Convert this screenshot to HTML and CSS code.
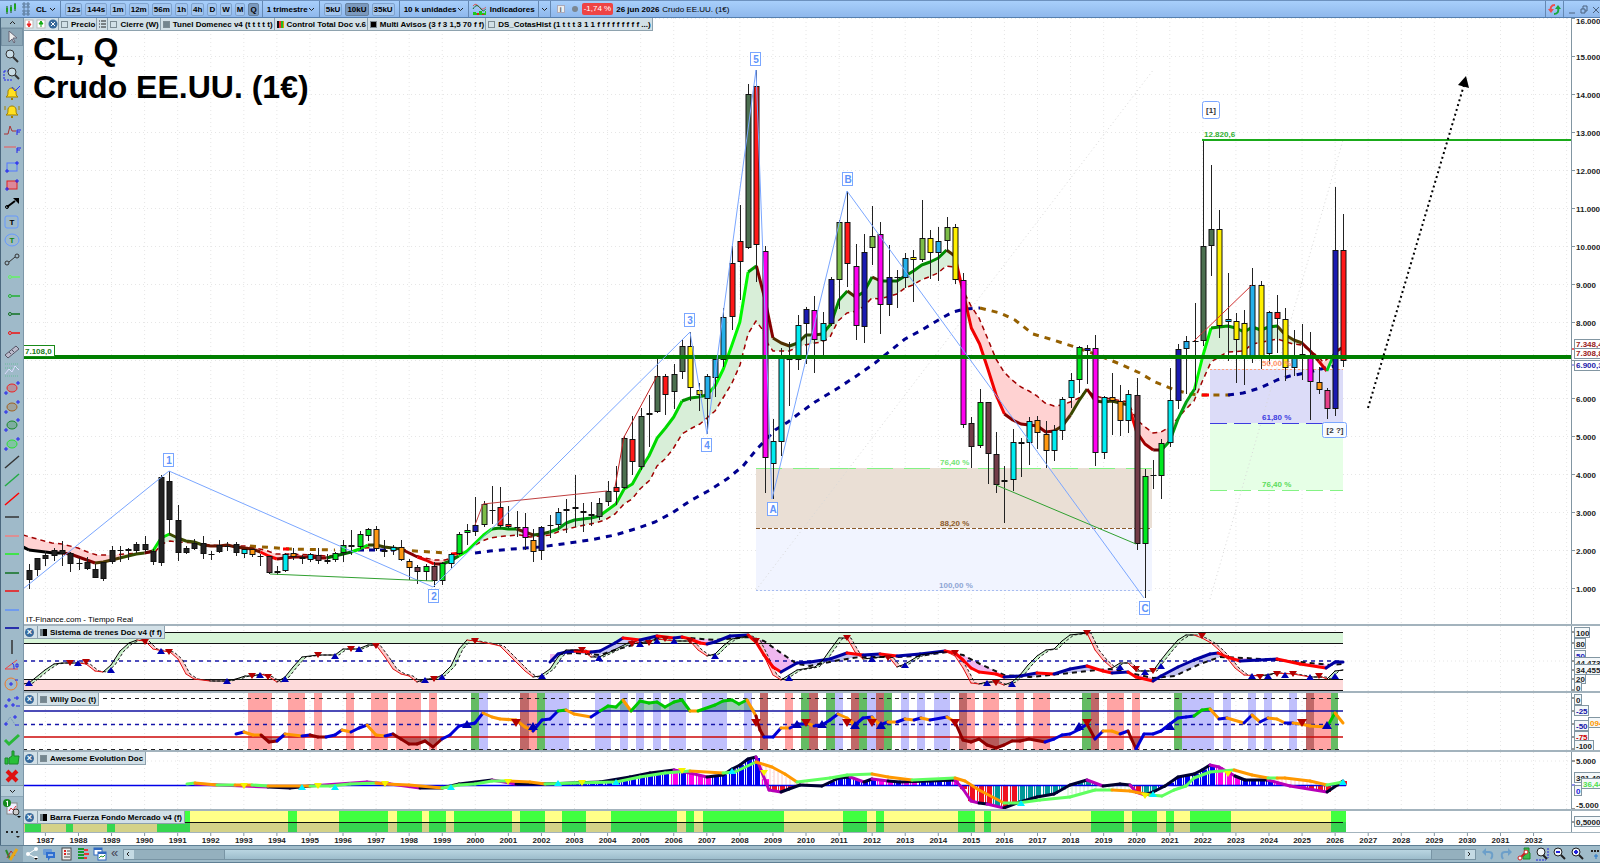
FILE: index.html
```html
<!DOCTYPE html>
<html lang="es">
<head>
    <meta charset="UTF-8">
    <meta name="viewport" content="width=device-width, initial-scale=1.0">
    <title>CL, Q - Crudo EE.UU. (1€)</title>
    <link rel="stylesheet" href="styles.css">
</head>
<body>
    <header class="topbar">
        <svg class="logo" width="14" height="14" viewBox="0 0 14 14"><path d="M3 4v8M7 3v8M11 1v8" stroke="#145a14"/><path d="M2 6h2v4H2zM6 5h2v4H6zM10 2h2v5h-2z" fill="#1ea51e"/></svg>
        <svg class="grip" width="8" height="14" viewBox="0 0 8 14"><path d="M1 1h2v2H1zM5 1h2v2H5zM1 4h2v2H1zM5 4h2v2H5zM1 8h2v2H1zM5 8h2v2H5zM1 11h2v2H1zM5 11h2v2H5z" fill="none" stroke="#5b7897"/></svg>
        <button class="menu symbol">CL <svg width="7" height="5" viewBox="0 0 7 5"><path d="M1 1l2.500 2.500L6 1"/></svg></button>
        <div class="group times">
            <button>12s</button><button>144s</button><button>1m</button><button>12m</button><button>56m</button><button>1h</button><button>4h</button><button>D</button><button>W</button><button>M</button><button class="on">Q</button>
        </div>
        <button class="menu period">1 trimestre <svg width="7" height="5" viewBox="0 0 7 5"><path d="M1 1l2.500 2.500L6 1"/></svg></button>
        <div class="group units">
            <button>5kU</button><button class="on">10kU</button><button>35kU</button>
        </div>
        <button class="menu amount">10 k unidades <svg width="7" height="5" viewBox="0 0 7 5"><path d="M1 1l2.500 2.500L6 1"/></svg></button>
        <button class="menu indicators"><svg class="pic" width="15" height="13" viewBox="0 0 15 13"><path d="M1 12V9h3v1h3V8h3v2h3V8h1v4z" fill="#1fc71f"/><path d="M5 12v-2h2v2zM10 12v-1h2v1z" fill="#d22"/><path d="M1 3c3-4 5 0 7 2s4 1 6-1" fill="none" stroke="#d55"/><path d="M1 6c3-5 5-4 8 0s4 0 5 0" fill="none" stroke="#196b2b"/></svg>Indicadores</button>
        <button class="menu small" aria-label="Más indicadores"><svg width="7" height="5" viewBox="0 0 7 5"><path d="M1 1l2.500 2.500L6 1"/></svg></button>
        <span class="info">i</span>
        <span class="dot"></span>
        <span class="change">-1,74 %</span>
        <b class="date">26 jun 2026</b>
        <span class="name">Crudo EE.UU. (1€)</span>
        <button class="refresh" aria-label="Actualizar"><svg width="13" height="13" viewBox="0 0 13 13" fill="none" stroke-width="2"><path d="M7 2C3 2 2 5 3 8" stroke="#ef4c4c"/><path d="M0 6l3 4 3-4z" fill="#ef4c4c"/><path d="M6 11c4 0 5-3 4-6" stroke="#18a83a"/><path d="M7 6l3-4 3 4z" fill="#18a83a"/></svg></button>
        <div class="window">
            <button aria-label="Minimizar"><svg width="8" height="9" viewBox="0 0 8 9"><path d="M1 8h6"/></svg></button>
            <button aria-label="Restaurar"><svg width="8" height="9" viewBox="0 0 8 9"><path d="M1 4h4v4H1zM3 4V1h4v5H5"/></svg></button>
            <button aria-label="Cerrar"><svg width="8" height="9" viewBox="0 0 8 9"><path d="M1 2l6 6M7 2L1 8"/></svg></button>
        </div>
    </header>

    <div class="work">
        <aside class="sidebar">
            <button class="up" aria-label="Subir"><svg width="7" height="5" viewBox="0 0 7 5"><path d="M1 4l2.500-2.500L6 4"/></svg></button>
            <div class="tools" id="tools"></div>
            <button class="down" aria-label="Bajar"><svg width="7" height="5" viewBox="0 0 7 5"><path d="M1 1l2.500 2.500L6 1"/></svg></button>
            <button class="extra" aria-label="Listas"><svg width="18" height="20" viewBox="0 0 18 20"><rect x="4" y="4" width="10" height="11" fill="#eef" stroke="#888"/><path d="M6 12l2-3 2 2 3-4" stroke="#d33" fill="none"/><circle cx="4" cy="4" r="4" fill="#138a1c"/><path d="M3 3l1.500-1v5" stroke="#fff" fill="none"/><circle cx="13" cy="13" r="3" fill="#ccc" stroke="#333"/><path d="M14 17h4l-2 2z"/></svg></button>
            <button class="extra" aria-label="Más"><svg width="18" height="12" viewBox="0 0 18 12"><path d="M3 4h2v2H3zM8 4h2v2H8zM13 4h2v2h-2zM13 9h4l-2 2z" fill="#222"/></svg></button>
        </aside>

        <main class="charts">
            <section class="panel price">
                <svg class="plot" id="price"></svg>
                <svg class="axis" id="priceAxis"></svg>
                <div class="tabs">
                    <div class="cell marks">
                        <svg width="34" height="10" viewBox="0 0 34 10"><rect x="1" y="1" width="8" height="8" fill="#fff" stroke="#bbb"/><path d="M5 2v4M3 5l2 3 2-3z" stroke="#e22" fill="#e22"/><rect x="13" y="1" width="8" height="8" fill="#fff" stroke="#bbb"/><path d="M17 8V4M15 5l2-3 2 3z" stroke="#1a1" fill="#1a1"/><circle cx="29" cy="5" r="4.500" fill="#36699b"/><path d="M27 3l4 4M31 3l-4 4" stroke="#fff"/></svg>
                    </div>
                    <div class="cell"><i class="box"></i>Precio</div>
                    <div class="cell list"><svg width="7" height="8" viewBox="0 0 7 8"><path d="M0 1h1M2 1h5M0 4h1M2 4h5M0 7h1M2 7h5" stroke="#222"/></svg></div>
                    <div class="cell"><i class="box"></i>Cierre (W)</div>
                    <div class="cell"><i class="box grey"></i>Tunel Domenec v4 (t t t t t)</div>
                    <div class="cell"><i class="box multi"></i>Control Total Doc v.6</div>
                    <div class="cell"><i class="box black"></i>Multi Avisos (3 f 3 1,5 70 f f)</div>
                    <div class="cell"><i class="box"></i>DS_CotasHist (1 t t t 3 1 1 f f f f f f f f f ...)</div>
                </div>
                <h1 class="title">CL, Q<br>Crudo EE.UU. (1€)</h1>
                <p class="source">IT-Finance.com - Tiempo Real</p>
            </section>
            <section class="panel trains">
                <svg class="plot" id="trains"></svg>
                <svg class="axis" id="trainsAxis"></svg>
                <h2 class="tag"><span class="close">×</span><span class="cell"><i class="box half"></i>Sistema de trenes Doc v4 (f f)</span></h2>
            </section>
            <section class="panel willy">
                <svg class="plot" id="willy"></svg>
                <svg class="axis" id="willyAxis"></svg>
                <h2 class="tag"><span class="close">×</span><span class="cell"><i class="box grey"></i>Willy Doc (t)</span></h2>
            </section>
            <section class="panel awesome">
                <svg class="plot" id="awesome"></svg>
                <svg class="axis" id="awesomeAxis"></svg>
                <h2 class="tag"><span class="close">×</span><span class="cell"><i class="box grey"></i>Awesome Evolution Doc</span></h2>
            </section>
            <section class="panel force">
                <svg class="plot" id="force"></svg>
                <svg class="axis" id="forceAxis"></svg>
                <h2 class="tag"><span class="close">×</span><span class="cell"><i class="box half"></i>Barra Fuerza Fondo Mercado v4 (f)</span></h2>
            </section>
            <svg class="years" id="years"></svg>
        </main>
    </div>

    <footer class="bottombar">
        <button class="draw" aria-label="Dibujar"><svg width="14" height="14" viewBox="0 0 14 14"><path d="M1 3l4 9" stroke="#2a8a2a" stroke-width="2"/><path d="M2 11l4-7 4 5" stroke="#a33" fill="none"/><path d="M5 13l7-11" stroke="#e8a818" stroke-width="3"/></svg></button>
        <div class="icons">
            <button aria-label="Compartir"><svg width="14" height="14" viewBox="0 0 14 14"><path d="M11 2L3 7l8 4" stroke="#fff" fill="none"/><circle cx="3" cy="7" r="2" fill="#fff"/><circle cx="11" cy="2" r="2" fill="#fff"/><circle cx="11" cy="11" r="2" fill="#fff"/><path d="M9 11h4l-2 2z"/></svg></button>
            <button aria-label="Chat"><svg width="14" height="14" viewBox="0 0 14 14"><rect x="1" y="2" width="9" height="6" rx="1" fill="#6a9bd8"/><path d="M4 5h9v6H8l-2 3v-3H4z" fill="#2f6fd0"/><path d="M6 8h5" stroke="#fff"/></svg></button>
            <button aria-label="Notas"><svg width="14" height="14" viewBox="0 0 14 14"><rect x="3" y="1" width="9" height="12" fill="#eee" stroke="#444"/><path d="M5 4h2M5 7h2" stroke="#d22" stroke-width="2"/><path d="M8 4h3M8 7h3M5 10h6" stroke="#444"/></svg></button>
            <button aria-label="Órdenes"><svg width="14" height="14" viewBox="0 0 14 14"><path d="M2 2h6M2 5h6M2 8h6M2 11h6" stroke="#18982c" stroke-width="2"/><path d="M8 3h4M8 7h5M8 11h3" stroke="#e33" stroke-width="2"/></svg></button>
            <button aria-label="Ventanas"><svg width="14" height="14" viewBox="0 0 14 14"><rect x="1" y="1" width="8" height="7" fill="#fff" stroke="#2f68c0"/><rect x="5" y="5" width="8" height="8" fill="#fff" stroke="#2f68c0"/><path d="M1 2h8M5 6h8" stroke="#2f68c0" stroke-width="2"/><path d="M6 11l2-2 2 1 2-2" stroke="#2a9a2a" fill="none"/></svg></button>
        </div>
        <span class="collapse">«</span>
        <div class="scroll">
            <button aria-label="Izquierda"><svg width="4" height="6" viewBox="0 0 4 6"><path d="M3 1L1 3l2 2"/></svg></button>
            <span class="before"></span><span class="thumb"></span><span class="after"></span>
            <button aria-label="Derecha"><svg width="4" height="6" viewBox="0 0 4 6"><path d="M1 1l2 2-2 2"/></svg></button>
        </div>
        <div class="icons zooms">
            <button aria-label="Deshacer"><svg width="14" height="14" viewBox="0 0 14 14"><path d="M3 5h5c4 0 4 4 2 7" stroke="#6c9fc9" stroke-width="2" fill="none"/><path d="M5 1v8L1 5z" fill="#6c9fc9"/></svg></button>
            <button aria-label="Rehacer"><svg width="14" height="14" viewBox="0 0 14 14"><path d="M11 5H6c-4 0-4 4-2 7" stroke="#6c9fc9" stroke-width="2" fill="none"/><path d="M9 1v8l4-4z" fill="#6c9fc9"/></svg></button>
            <button aria-label="Configurar"><svg width="14" height="14" viewBox="0 0 14 14"><path d="M7 1h5v4l1 1v6H6V9l2-1z" fill="#3cbc4c" stroke="#188a28"/><path d="M9 5l-6 6" stroke="#c22" stroke-width="2"/><circle cx="3" cy="11" r="2" fill="#fff" stroke="#c22"/><circle cx="9" cy="5" r="2" fill="#fff" stroke="#c22"/></svg></button>
            <button aria-label="Ajustar"><svg width="14" height="14" viewBox="0 0 14 14"><circle cx="6" cy="5" r="4" fill="#eef4f8" stroke="#222"/><path d="M8 8l4 4" stroke="#222" stroke-width="2"/><path d="M13 1v10M1 13h10" stroke="#22d" stroke-dasharray="2 1"/></svg></button>
            <button aria-label="Alejar"><svg width="14" height="14" viewBox="0 0 14 14"><circle cx="5" cy="5" r="4" fill="#eef4f8" stroke="#222"/><path d="M8 8l4 4" stroke="#222" stroke-width="2"/><path d="M3 5h4" stroke="#22d" stroke-width="2"/></svg></button>
            <button aria-label="Acercar"><svg width="14" height="14" viewBox="0 0 14 14"><circle cx="5" cy="5" r="4" fill="#eef4f8" stroke="#222"/><path d="M8 8l4 4" stroke="#222" stroke-width="2"/><path d="M3 5h4M5 3v4" stroke="#22d" stroke-width="2"/></svg></button>
            <button aria-label="Más zoom"><svg width="14" height="14" viewBox="0 0 14 14"><path d="M2 4h10" stroke="#222" stroke-width="2" stroke-dasharray="2 1"/><path d="M7 7v5M5 9h4" stroke="#27c"/></svg></button>
        </div>
    </footer>
    <script src="script.js"></script>
</body>
</html>
```
FILE: styles.css
```css
* {
    box-sizing: border-box;
}

body {
    margin: 0;
    height: 100vh;
    display: flex;
    flex-direction: column;
    overflow: hidden;
    background: #fff;
    font: 8px "Liberation Sans", Arial, sans-serif;
    color: #000;
}

button {
    padding: 0;
    border: 0;
    background: none;
    font: inherit;
    color: inherit;
}

svg {
    display: block;
}

/* top bar */
.topbar {
    flex: 0 0 18px;
    display: flex;
    align-items: center;
    background: linear-gradient(#a8cffb, #8fb8ec);
    border-top: 1px solid #6d91be;
    border-bottom: 1px solid #557fae;
    font-weight: bold;
    white-space: nowrap;
}

.logo {
    margin-left: 4px;
}

.grip {
    margin-left: 4px;
}

.menu {
    display: flex;
    align-items: center;
    justify-content: space-between;
    height: 16px;
    padding: 0 4px;
    font-weight: bold;
    border-right: 1px solid #6488b3;
}

.menu > svg:not(.pic), .up svg, .down svg, .window svg, .scroll svg {
    fill: none;
    stroke: #222;
}

.symbol {
    width: 29px;
    margin-left: 2px;
}

.period {
    width: 57px;
}

.amount {
    width: 69px;
}

.indicators {
    width: 70px;
    padding: 0 3px;
}

.small {
    width: 12px;
    padding: 0 2px;
}

.group {
    display: flex;
    gap: 3px;
    height: 16px;
    align-items: center;
    padding: 0 3px 0 4px;
    border-right: 1px solid #6488b3;
}

.group button {
    height: 13px;
    padding: 0 1px;
    border: 1px solid #7fa3cf;
    border-radius: 2px;
    background: #a4c6ee;
    font-weight: bold;
}

.group .on {
    background: #7b99bd;
    border-color: #66819f;
}

.units {
    padding-right: 4px;
}

.info {
    width: 8px;
    height: 8px;
    margin-left: 6px;
    background: #eee;
    border: 1px solid #aab;
    color: #666;
    line-height: 7px;
    text-align: center;
}

.dot {
    width: 6px;
    height: 6px;
    margin: 0 4px 0 7px;
    border-radius: 3px;
    background: #7c8791;
}

.change {
    padding: 0 2px;
    line-height: 12px;
    background: #ee4444;
    border-radius: 2px;
    color: #fff;
    font-weight: normal;
}

.date {
    margin: 0 3px;
}

.name {
    font-weight: normal;
}

.refresh {
    margin-left: auto;
    height: 16px;
    padding: 0 2px;
    border-left: 1px solid #6488b3;
    border-right: 1px solid #6488b3;
}

.window {
    display: flex;
    gap: 4px;
    padding: 0 0 0 4px;
}

.window svg {
    stroke: #4c627f;
}

/* left tools */
.work {
    flex: 1;
    display: flex;
    min-height: 0;
}

.sidebar {
    flex: 0 0 23px;
    display: flex;
    flex-direction: column;
    background: #9fbac9;
    border-left: 1px solid #4b687e;
    border-right: 1px solid #7d97a8;
}

.up, .down {
    height: 10px;
    display: flex;
    align-items: center;
    justify-content: center;
    border-bottom: 1px solid #8aa5b5;
}

.down {
    height: 12px;
    border-top: 1px solid #7d98a8;
    background: #b6cdd9;
}

.tools {
    flex: 1;
    display: flex;
    flex-direction: column;
}

.tools button {
    flex: 1;
    display: flex;
    min-height: 0;
    align-items: center;
    justify-content: center;
}

.tools .on {
    background: #8ba6b6;
    outline: 1px solid #7792a4;
    outline-offset: -1px;
}

.extra {
    height: 24px;
    padding: 2px;
}

/* panels */
.charts {
    flex: 1;
    display: flex;
    flex-direction: column;
    min-width: 0;
}

.panel {
    position: relative;
    display: flex;
    border-bottom: 2px solid #a3b3bd;
    overflow: hidden;
}

.price {
    flex: 1;
    min-height: 0;
}

.trains {
    flex: 0 0 67px;
}

.willy {
    flex: 0 0 59px;
}

.awesome {
    flex: 0 0 59px;
}

.force {
    flex: 0 0 22px;
    border-bottom-width: 1px;
}

.plot {
    flex: 1;
    height: 100%;
    min-width: 0;
}

.axis {
    flex: 0 0 29px;
    height: 100%;
    border-left: 1px solid #8296a2;
}

.years {
    flex: 0 0 12px;
    width: 100%;
}

svg text {
    font: bold 8px "Liberation Sans", Arial, sans-serif;
}

svg .wave {
    font-size: 10px;
}

.tabs {
    position: absolute;
    left: 0;
    top: 0;
    display: flex;
    background: #d2e0e7;
    border: 1px solid #8ea2ae;
    border-top: 0;
    border-left: 0;
    font-weight: bold;
    white-space: nowrap;
}

.cell {
    display: flex;
    align-items: center;
    height: 12px;
    padding: 0 2px;
    border-right: 1px solid #8ea2ae;
}

.tabs .cell {
    padding: 0 1px 0 2px;
}

.tabs .marks {
    padding: 0;
}

.cell:last-child {
    border-right: 0;
}

.box {
    width: 7px;
    height: 7px;
    margin-right: 3px;
    border: 1px solid #7d8c94;
}

.grey {
    background: #74868f;
}

.black {
    background: #000;
}

.multi {
    border: 0;
    background: linear-gradient(90deg, #111 2px, #e33 2px 4px, #2b2 4px 6px, #d90 6px);
}

.half {
    border: 0;
    background: linear-gradient(90deg, #6c7c84 3px, #000 3px);
}

.title {
    position: absolute;
    left: 9px;
    top: 12px;
    margin: 0;
    font-size: 32px;
    line-height: 38px;
}

.source {
    position: absolute;
    left: 2px;
    bottom: 0;
    margin: 0;
    line-height: 8px;
}

.tag {
    position: absolute;
    left: 0;
    top: 0;
    display: flex;
    align-items: center;
    margin: 0;
    background: #d2e0e7;
    border: 1px solid #8ea2ae;
    border-left: 0;
    border-top: 0;
    font-size: 8px;
    white-space: nowrap;
}

.tag .close {
    width: 9px;
    height: 9px;
    margin: 0 3px 0 1px;
    border-radius: 5px;
    background: #36699b;
    color: #fff;
    font-size: 9px;
    line-height: 9px;
    text-align: center;
}

.tag .cell {
    border-left: 1px solid #8ea2ae;
}

/* bottom bar */
.bottombar {
    flex: 0 0 18px;
    display: flex;
    align-items: center;
    background: #a0bcca;
    border-top: 1px solid #5f7f94;
    border-bottom: 1px solid #5f7f94;
}

.draw {
    width: 23px;
    height: 16px;
    padding-left: 5px;
    background: #8ba6b6;
}

.icons {
    display: flex;
    gap: 3px;
}

.bottombar .icons {
    padding-left: 2px;
}

.bottombar .zooms {
    gap: 4px;
    padding: 0 0 0 5px;
    margin-right: -3px;
}

.collapse {
    margin: 0 5px 2px 4px;
    font-size: 13px;
    line-height: 12px;
    color: #445;
}

.scroll {
    flex: 1;
    display: flex;
    height: 11px;
    border: 1px solid #7894a4;
}

.scroll button {
    width: 10px;
    padding-left: 2px;
    background: #c4dae4;
}

.before {
    width: 90px;
    background: #94b0be;
}

.thumb {
    flex: 1;
    background: linear-gradient(#b9d5e1, #9dbdcc);
    border-left: 1px solid #7894a4;
    border-right: 1px solid #7894a4;
}

.after {
    width: 33px;
    background: #94b0be;
}
```
FILE: script.js
```js
const LEFT = 24, AXIS = 1573, STEP = 8.267, FIRST = 28.9;
const barX = i => FIRST + STEP * i;
const yearX = y => 45.4 + 33.07 * (y - 1987);

function paint(id, left, top, body) {
    document.getElementById(id).innerHTML = `<g transform="translate(${-left},${-top})">${body}</g>`;
}
const rect = (x, y, w, h, fill, extra = '') => `<rect x="${x}" y="${y}" width="${w}" height="${h}" fill="${fill}" ${extra}/>`;
const line = (x1, y1, x2, y2, color, w = 1, dash = '') =>
    `<line x1="${x1}" y1="${y1}" x2="${x2}" y2="${y2}" stroke="${color}" stroke-width="${w}" stroke-dasharray="${dash}"/>`;
const poly = (pts, color, w = 1, dash = '') =>
    `<polyline points="${pts.join(' ')}" fill="none" stroke="${color}" stroke-width="${w}" stroke-dasharray="${dash}" stroke-linejoin="round"/>`;
const text = (x, y, s, color = '#222', extra = '') => `<text x="${x}" y="${y}" fill="${color}" ${extra}>${s}</text>`;
const up = (x, y, c, r = 5) => `<path d="M${x - r} ${y + r - 1}L${x} ${y - r + 1}L${x + r} ${y + r - 1}z" fill="${c}"/>`;
const down = (x, y, c, r = 5) => `<path d="M${x - r} ${y - r + 1}L${x} ${y + r - 1}L${x + r} ${y - r + 1}z" fill="${c}"/>`;

// "x,y x,y ..." -> [[x, y], ...]
const parse = s => s.trim().split(/\s+/).map(p => p.split(',').map(Number));

function at(pts, x) {
    if (x <= pts[0][0]) return pts[0][1];
    for (let i = 1; i < pts.length; i++) {
        if (x <= pts[i][0]) {
            const [a, b] = [pts[i - 1], pts[i]];
            return a[1] + (b[1] - a[1]) * (x - a[0]) / (b[0] - a[0]);
        }
    }
    return pts[pts.length - 1][1];
}

// "k:x,y x,y k:x,y" each letter sets the colour of the piece that ends there
function colored(s, colors, w) {
    let key = '', prev = null, out = '';
    s.trim().split(/\s+/).forEach(p => {
        if (p[1] === ':') { key = p[0]; p = p.slice(2); }
        const q = p.split(',').map(Number);
        if (prev) out += `<path d="M${prev}L${q}" stroke="${colors[key]}" stroke-width="${w}" stroke-linecap="round"/>`;
        prev = q;
    });
    return out;
}
const plain = s => parse(s.replace(/[a-z]:/g, ''));

function band(a, b, above, below) {
    let out = '';
    for (let x = a[0][0]; x < a[a.length - 1][0]; x += 4) {
        const x2 = Math.min(x + 4, a[a.length - 1][0]);
        const [y1, y2, z1, z2] = [at(a, x), at(a, x2), at(b, x), at(b, x2)];
        out += `<path d="M${x} ${y1}L${x2} ${y2}V${z2}L${x} ${z1}z" fill="${y1 + y2 < z1 + z2 ? above : below}" shape-rendering="crispEdges"/>`;
    }
    return out;
}

function grid(top, bottom, rows) {
    let out = '';
    for (let y = 1987; y <= 2033; y++) out += line(yearX(y), top, yearX(y), bottom, '#e6e6e6', 1, '1 3');
    rows.forEach(r => out += line(23, r, 1600, r, '#e6e6e6', 1, '1 3'));
    return out;
}

/* ---------- price ---------- */
const C = { K: '#222', C: '#00ecf0', O: '#ff9812', M: '#733c48', L: '#00e820', P: '#e64088', N: '#1a1ab0', G: '#7cbc48', R: '#ff1818', F: '#ff00f0', S: '#25b0ea', D: '#4c7050', Y: '#fff000', E: '#008020' };
// high, open/close top, open/close bottom, low, colour
const candles = `565 571 581 590 K|559 559 571 577 K|552 556 560 567 K|549 551 557 562 K|542 551 555 567 K|553 554 565 573 K|559 564 564 571 K|558 563 570 571 K|565 570 579 579 K|563 563 580 582 K
547 551 563 565 K|547 551 551 563 K|549 550 551 561 K|543 545 552 554 K|537 545 551 553 K|550 552 563 566 K|476 478 564 567 K|472 482 521 535 K|506 521 554 562 K|547 549 554 555 K
540 544 550 551 K|537 544 555 560 K|552 555 555 561 K|541 546 553 554 K|543 547 547 552 K|543 545 554 557 K|550 550 555 559 C|550 550 556 558 O|555 557 557 567 K|557 557 574 575 M
567 572 574 576 L|554 555 572 573 C|549 554 558 561 O|556 558 560 565 O|554 555 561 563 C|549 556 562 565 M|555 561 563 565 C|553 554 561 563 L|541 546 554 563 L|531 546 548 556 P
532 535 548 550 L|529 530 537 542 L|527 530 550 552 O|541 551 553 558 O|546 548 552 556 C|541 548 561 562 O|560 562 569 581 O|566 568 573 585 M|565 567 573 582 L|563 567 582 588 M
563 564 582 586 L|554 555 565 569 C|533 535 555 556 L|525 531 534 546 L|498 526 533 537 N|502 505 526 528 G|487 511 511 525 K|488 508 527 529 R|507 525 528 529 R|512 528 528 538 K
514 528 539 551 F|530 541 553 563 O|527 528 552 561 N|516 526 526 539 K|509 513 526 531 S|500 510 512 534 D|476 508 510 528 R|504 512 514 533 R|503 515 517 527 R|499 504 518 521 D
482 492 503 507 D|467 488 493 506 R|437 439 489 490 D|417 440 463 476 R|409 417 468 471 D|396 414 416 448 R|359 377 413 414 D|375 377 396 416 R|365 375 393 410 D|341 347 373 380 D
333 347 389 402 Y|384 391 396 412 Y|375 377 400 435 S|358 360 379 398 S|309 318 361 368 S|247 264 318 331 R|206 242 263 301 R|85 95 249 250 D|71 87 246 283 R|247 252 459 494 F
420 442 465 500 C|349 359 443 457 C|343 360 360 407 K|316 326 361 371 C|308 310 325 365 N|297 311 341 374 F|313 324 342 357 C|278 280 325 327 N|221 223 281 310 G|192 223 265 288 R
245 267 327 341 F|235 253 328 344 N|207 237 249 266 G|223 235 306 335 F|246 278 306 317 N|271 278 278 309 K|254 259 279 289 S|251 258 261 303 Y|201 239 261 263 G|231 239 254 280 Y
228 242 254 282 S|218 228 242 252 G|225 228 281 285 Y|274 281 426 429 F|418 424 448 469 M|390 403 447 449 L|403 403 455 485 M|433 455 486 494 M|467 481 483 524 E|430 443 481 492 C
439 443 445 478 O|418 422 444 466 C|417 421 434 450 O|422 435 452 469 O|426 431 452 462 C|398 400 432 441 C|374 381 399 409 C|347 348 381 394 L|346 349 352 385 N|336 349 454 467 F
397 398 454 460 C|374 398 402 436 O|386 402 422 437 O|391 395 422 434 C|379 396 545 551 M|470 477 545 599 L|461 476 476 490 K|440 444 477 500 L|369 401 444 448 C|345 350 402 410 N
337 342 350 395 S|304 342 342 391 K|141 247 342 347 D|166 230 247 277 D|211 230 327 339 Y|274 320 323 362 S|314 322 341 384 Y|311 324 360 386 Y|269 286 360 364 S|282 286 358 370 Y
312 313 355 365 S|296 313 320 354 R|309 320 369 382 Y|331 356 369 377 S|325 355 356 381 Y|333 358 383 421 F|368 383 391 395 O|389 391 410 420 P|188 251 410 417 N|215 251 362 368 R`.split(/[|\n]/).map(r => r.split(' '));

const mean = [551, 552, 553, 554, 554, 555, 558, 561, 564, 563, 561, 559, 557, 555, 554, 552, 539, 535, 539, 542, 543, 546, 547, 547, 546, 548, 549, 550, 553, 557, 560, 559, 558, 558, 558, 559, 559, 557, 555, 553,
    550, 546, 546, 548, 549, 550, 554, 558, 561, 565, 565, 562, 557, 552, 544, 536, 530, 529, 530, 530, 533, 536, 535, 533, 530, 524, 521, 520, 519, 517, 511, 505, 490, 485, 470, 457, 439, 429, 418, 402,
    399, 398, 396, 387, 370, 347, 323, 273, 267, 299, 339, 344, 347, 344, 336, 336, 335, 325, 301, 292, 298, 293, 278, 282, 282, 282, 277, 272, 266, 263, 259, 251, 257, 293, 329, 345, 370, 396, 415, 421,
    425, 426, 427, 433, 432, 427, 416, 402, 390, 402, 403, 402, 404, 406, 433, 445, 451, 451, 442, 420, 403, 390, 357, 329, 328, 327, 329, 333, 328, 331, 328, 327, 336, 341, 344, 352, 362, 372, 353, 348];
// last index of each colour run
const meanRuns = [[4, '#000'], [8, '#800000'], [11, '#4b3800'], [14, '#344c00'], [15, '#600'], [17, '#00e800'], [21, '#3c4a00'], [28, '#6b1500'], [30, '#f00'], [36, '#850000'], [39, '#006000'], [41, '#00e800'], [45, '#384000'], [47, '#850000'], [49, '#e00000'], [50, '#700'], [52, '#007a00'], [56, '#00f000'], [59, '#008000'], [61, '#5a2000'], [63, '#205500'], [69, '#009a10'], [79, '#00d800'], [82, '#009000'], [87, '#00f800'], [88, '#00a000'], [90, '#850000'], [92, '#503000'], [96, '#304800'], [99, '#008a00'], [100, '#503000'], [102, '#008a00'], [103, '#503000'], [106, '#006800'], [111, '#008c00'], [112, '#503000'], [118, '#f00000'], [124, '#850000'], [126, '#503000'], [128, '#384800'], [129, '#800000'], [133, '#384000'], [134, '#f00'], [136, '#a00000'], [137, '#600'], [141, '#00a010'], [143, '#00f800'], [151, '#009000'], [154, '#504000'], [156, '#800000'], [157, '#d00000'], [158, '#00c820'], [159, '#900000']];
const tunnel = parse(`23,536 37,540 52,544 62,545 78,549 90,554 97,556 110,556 125,555 145,554 155,553 162,545 170,542 180,543 195,544 210,546 227,547 245,547 255,549 265,551 276,555 290,555 310,556 327,557 340,556 352,553 365,549 380,548 395,549
405,552 415,556 425,559 435,561 445,561 452,559 462,555 472,548 482,542 490,539 505,537 520,536 530,538 540,537 550,536 563,531 580,527 595,524 605,521 615,515 624,505 632,500 640,490 650,481 657,467 665,460 673,450 682,435 692,429 700,425
707,419 715,412 723,399 732,384 740,366 748,335 756,322 762,330 768,345 773,352 789,352 800,347 815,344 822,343 830,338 838,322 847,314 857,312 864,307 872,299 880,300 897,295 905,289 913,286 921,281 929,278 938,274 946,267 954,268
964,293 971,307 979,319 987,338 996,360 1004,373 1012,381 1021,388 1029,392 1037,397 1045,404 1054,407 1062,406 1070,403 1079,399 1087,391 1095,397 1104,399 1112,400 1128,403 1136,420 1145,428 1153,434 1161,433 1170,428 1178,419 1186,410
1194,402 1202,383 1211,363 1219,358 1227,353 1244,352 1252,345 1277,340 1293,345 1302,346 1310,352 1318,357 1323,363 1334,355 1343,355`);

(function price() {
    let s = '';
    const rows = [];
    for (let p = 1; p <= 16; p++) rows.push(627.5 - 38 * p);
    s += grid(19, 628, rows);
    // retracements
    s += rect(756, 469, 396, 60, '#eadfd5') + rect(756, 530, 396, 62, '#f1f4ff');
    s += line(756, 469.5, 1152, 469.5, '#84f284', 1, '26 11') + line(756, 529.5, 1152, 529.5, '#8b5a2b', 1, '4 2') + line(756, 591.5, 1152, 591.5, '#a8bdf0', 1, '2 2');
    s += rect(1210, 370, 133, 54, '#dcdcf8') + rect(1210, 424, 133, 67, '#e6ffe6');
    s += line(1210, 370.5, 1343, 370.5, '#ffa07a', 1, '2 2') + line(1210, 424.5, 1343, 424.5, '#3c3ce0', 1, '17 7') + line(1210, 491.5, 1343, 491.5, '#84f284', 1, '17 7');
    s += line(756, 591, 1154, 70, '#d8d8d8', 1, '1 3') + line(1210, 600, 1343, 141, '#d8d8d8', 1, '1 3');
    s += text(940, 466, '76,40 %', '#74e474') + text(940, 527, '88,20 %', '#8b5a2b') + text(939, 589, '100,00 %', '#8ea6d4');

    const center = mean.map((y, i) => [barX(i), y]);
    center.unshift([23, 548]);
    s += band(center, tunnel, '#d8eed8', '#ffd2d2');
    s += poly(tunnel, '#a00000', 1.500, '5 4');
    s += poly(parse('250,547 290,550 335,551'), '#956000', 3, '6 6') + poly(parse('283,550 289,550'), '#f00', 3);
    s += poly(parse('358,551 375,551 395,551'), '#000090', 3, '6 5') + poly(parse('400,551 415,552 430,553 446,554'), '#956000', 3, '6 6') + poly(parse('451,555 463,554'), '#f00', 3);
    s += poly(parse('475,554 490,552 512,550 540,548 555,546 590,541 615,536 635,530 655,523 672,514 690,502 710,491 727,480 743,467 757,450 775,431 788,423 797,416 815,403 835,391 855,378 875,364 905,340 920,332 940,320 953,313 965,310 980,309'), '#000090', 3, '6 6');
    s += poly(parse('980,309 1000,314 1015,321 1033,335 1050,340 1075,348 1095,355 1120,365 1140,374 1155,383 1175,391 1190,395 1202,396 1230,396'), '#956000', 3, '6 6') + poly(parse('1202,396 1209,396'), '#f00', 3);
    s += poly(parse('1228,396 1243,394 1260,389 1277,381 1290,377 1305,374 1325,369 1343,365'), '#000090', 3, '6 6');
    let from = 0;
    center.shift();
    s += line(23, 548, 29, 551, '#000', 3);
    meanRuns.forEach(([to, color]) => {
        s += poly(center.slice(from, to + 1), color, 3);
        from = to;
    });

    candles.forEach(([h, t, b, l, k], i) => {
        const x = Math.round(barX(i)) + .500;
        s += line(x, h, x, l, '#222');
        if (t === b) s += line(x - 3, +t + .500, x + 3, +t + .500, '#111');
        else s += rect(x - 2.500, +t + .500, 5, Math.max(1, b - t - 1), C[k], 'stroke="#111"');
    });

    s += line(23, 358, 1600, 358, '#007f00', 4) + line(1202, 141, 1600, 141, '#1aaa1a', 2);
    s += poly(parse('23,590 169,472 433,588 690,333 707,435 756,71 772,500 847,192 1144,599'), '#7aa6ff');
    s += poly(parse('475,526 483,505 607,492'), '#c04040') + poly(parse('615,488 624,438 657,377'), '#c02020') + line(1194, 342, 1252, 286, '#d03030');
    s += line(270, 575, 433, 582, '#30a030') + line(996, 486, 1136, 545, '#30a030');

    [['1', 169, 461], ['2', 434, 597], ['3', 690, 321], ['4', 707, 446], ['5', 756, 60], ['A', 773, 510], ['B', 848, 180], ['C', 1145, 609]].forEach(([c, x, y]) => {
        s += rect(x - 5.500, y - 6.500, 10, 13, '#fff', 'stroke="#7aa6ff"') + text(x, y + 4, c, '#5f93fa', 'text-anchor="middle" class="wave"');
    });
    s += rect(1202.500, 102.500, 17, 17, '#fff', 'rx="2" stroke="#7aa6ff"') + text(1211, 114, '[1]', '#333', 'text-anchor="middle"');
    s += rect(1322.500, 423.500, 24, 15, '#f8fbff', 'rx="2" stroke="#7aa6ff"') + text(1335, 434, '[2 ?]', '#333', 'text-anchor="middle"');
    s += text(1204, 138, '12.820,6', '#30b030') + text(1262, 367, '50,00 %', '#ff9468') + text(1262, 421, '61,80 %', '#3c3ce0') + text(1262, 488, '76,40 %', '#5cdc5c');
    s += rect(22.500, 346.500, 32, 11, '#fff', 'stroke="#1a8a1a"') + text(25, 355, '7.108,0', '#147a14');
    s += line(1368, 409, 1464, 86, '#000', 2, '2 3') + '<path d="M1466 77L1458 86L1469 89z"/>';
    paint('price', LEFT, 19, s);

    let a = '';
    for (let p = 1; p <= 16; p++) {
        const y = 627.5 - 38 * p;
        a += line(1571, y, 1576, y, '#8296a2');
        if (p !== 7) a += text(1577, Math.max(y + 3, 25), p + '.000');
    }
    a += line(1571, 350, 1576, 350, '#e66', 2) + line(1571, 366, 1576, 366, '#55d');
    [[345, '7.348,4', '#9a1a1a'], [354, '7.308,8', '#9a1a1a'], [366, '6.900,3', '#22a']].forEach(([y, t, c]) => {
        a += rect(1575.500, y - 4.500, 30, 10, '#fff', 'stroke="#8296a2"') + text(1577, y + 3, t, c);
    });
    paint('priceAxis', AXIS, 19, a);
})();

// axis value inside its little frame
const framed = (x, y, t, c, w) => rect(x - 1.500, y - 4.500, w, 10, '#f4f8fa', 'stroke="#8296a2"') + text(x, y + 4, t, c);

/* ---------- trains ---------- */
(function trains() {
    const fast = parse(`23,684 29,683 45,670 54,664 62,663 79,663 86,664 95,671 103,672 111,665 120,651 129,643 137,640 145,641 153,649 163,651 170,652 178,659 186,674 194,679 210,681 227,681 236,679 245,676 252,676 261,674 269,677 277,682 285,677 293,667 302,657 318,655 335,655 343,649 358,649 368,645 376,645 385,657 393,669 401,674 409,676 417,682 425,679 434,679 442,675 451,666 459,649 467,640 475,641 492,644 500,646 508,654 525,671 533,677 540,676
550,669 558,657 566,650 582,650 591,657 599,657 608,653 620,647 632,641 640,643 649,641 657,639 674,641 690,641 698,650 707,656 715,654 723,646 732,639 748,636 756,640 764,656 773,675 781,680 789,675 797,670 815,667 823,660 830,650 839,638 847,638 855,652 863,659 872,658 888,656 897,667 905,664 920,655 940,652 947,652 955,656 963,668 971,683 979,684 987,682 996,682 1004,685 1012,682 1020,675 1028,665 1037,656 1046,650 1054,649
1062,641 1070,635 1087,633 1095,650 1103,660 1112,668 1120,663 1128,663 1136,671 1145,671 1153,671 1161,660 1169,650 1178,640 1186,635 1194,635 1202,638 1211,643 1219,650 1227,658 1235,668 1244,675 1260,676 1276,673 1293,674 1310,677 1322,677 1327,679 1335,671 1343,670`);
    const slow = parse(`550,662 558,654 566,652 575,651 591,652 600,651 615,643 623,638 640,640 657,636 674,638 682,637 690,639 700,643 707,644 715,642 730,636 748,635 756,642 764,655 773,667 781,672 797,663 810,662 830,659 847,653 863,655 880,654 897,656 920,654 945,651 955,653 963,660 971,668 979,672 996,674 1004,677 1020,676 1037,673 1054,674 1070,669 1087,666 1103,671 1112,673 1128,672 1136,677 1153,681 1161,676 1178,667 1194,660 1210,654 1218,653 1227,657 1240,661 1260,660 1277,659 1300,664 1326,668 1335,662 1343,662`);
    const slowLag = parse(`558,654 575,653 600,655 615,650 640,643 657,638 690,638 715,640 748,637 764,641 781,653 797,664 810,666 840,660 860,657 897,657 920,656 947,652 963,655 980,664 1004,675 1030,677 1070,673 1087,671 1110,669 1130,673 1153,678 1175,676 1200,664 1220,657 1245,658 1277,660 1300,662 1330,665 1343,664`);
    const lag = fast.map(([x, y]) => [Math.min(x + 4, 1343), y]);
    let s = grid(626, 693, [661]);
    s += rect(23, 632, 1320, 11, '#d8f5d8') + rect(23, 679, 1320, 11, '#fddada');
    s += band(slow, slowLag, '#c4c4f0', '#f0b8f0') + band(fast, lag, '#c8f0c8', '#fcc8c8');
    [632, 643, 679, 690].forEach(y => s += line(23, y + .500, 1343, y + .500, '#111'));
    s += line(23, 661, 1343, 661, '#1414a8', 1.500, '4 4');
    s += poly(lag, '#222', 1, '3 2') + poly(slowLag, '#111', 2, '5 4');
    const slope = (pts, rise, fall, w) => pts.slice(1).map((p, i) => {
        const q = pts[i];
        return `<path d="M${q}L${p}" stroke="${p[1] > q[1] ? fall : rise}" stroke-width="${w}" stroke-linecap="round"/>`;
    }).join('');
    s += slope(slow, '#0000a0', '#f00', 3) + slope(fast, '#000', '#e01010', 1);
    parse('29,683 78,663 111,670 161,651 227,681 260,675 285,679 335,656 359,649 425,680 442,677 542,676 599,658 640,644 657,641 674,641 715,656 789,678 872,659 905,665 987,683 1012,684 1120,667 1145,672 1161,666 1252,676 1268,676 1285,675 1310,677 1335,676').forEach(([x, y]) => s += up(x, y, '#0000b4', 4));
    parse('70,663 86,662 145,642 169,652 252,676 268,677 318,655 351,649 376,646 434,679 475,641 582,650 632,644 649,643 665,639 690,641 756,641 847,638 888,658 955,653 996,683 1087,633 1136,669 1153,671 1202,636 1260,677 1277,674 1293,674 1319,676').forEach(([x, y]) => s += down(x, y, '#b40000', 4));
    paint('trains', LEFT, 626, s);
    let a = '';
    [632, 643, 661, 670, 679, 690].forEach(y => a += line(1571, y, 1576, y, '#333'));
    a += framed(1577, 655, '50', '#22b', 11) + framed(1577, 632, '100', '#222', 15) + framed(1577, 643, '80', '#222', 11) + framed(1577, 678, '20', '#222', 11) + framed(1577, 687, '0', '#222', 7) + framed(1577, 662, '44,473', '#222', 30) + framed(1577, 669, '34,455', '#222', 30);
    paint('trainsAxis', AXIS, 626, a);
})();

/* ---------- willy ---------- */
(function willy() {
    let s = grid(693, 752, []);
    const zones = {
        '#ffa4a4': '248-272 288-305 314-322 346-354 371-388 396-421 429-437 529-537 785-793 967-975 983-999 1016-1024 1033-1050 1107-1124 1132-1140 1314-1331',
        '#c0c0fc': '479-488 545-569 595-611 620-628 636-644 653-661 669-686 702-727 744-752 835-843 867-876 901-909 917-925 934-950 1182-1214 1223-1231 1248-1256 1264-1272 1289-1297',
        '#64bc64': '471-479 537-545 801-809 826-835 859-867 884-892 1082-1091 1174-1182 1331-1338',
        '#c06868': '520-529 760-768 809-818 851-859 876-884 959-967 1091-1099 1306-1314'
    };
    for (const color in zones) zones[color].split(' ').forEach(z => {
        const [a, b] = z.split('-');
        s += rect(a, 693, b - a, 60, color);
    });
    const path = `b:236,734 244,732 o:253,735 261,735 d:269,742 277,741 b:285,734 o:302,736 b:310,735 d:318,737 326,737 b:335,735 342,730 o:351,732 b:359,728 367,725 o:376,735 385,736 b:393,734 d:401,739 409,744 417,744 425,741 433,747 442,739 b:450,735 459,726 475,723 483,713 o:492,717 500,719 516,720 525,727 533,731 b:542,720 550,719 558,711 g:566,710 o:574,714 591,717 b:600,711 g:608,706 616,707 623,700 o:631,711 g:640,701 649,703 657,702 665,707 674,702 682,700 690,711 o:698,711 g:715,705 723,701 732,700 739,704 747,700
o:756,716 d:760,730 764,737 b:773,737 781,728 o:790,728 b:798,724 809,724 o:814,726 b:822,725 830,720 838,714 o:847,718 855,725 b:863,718 872,717 o:880,725 b:888,722 o:897,722 b:905,719 o:914,720 b:921,718 o:930,720 b:947,717 o:955,722 d:963,740 971,742 979,739 987,745 996,748 1004,745 1012,741 1020,741 1029,739 1045,742 b:1054,739 1062,735 1070,734 1080,729 1087,724 d:1095,739 b:1103,731 o:1112,731 1120,734 b:1128,731 d:1136,749
b:1144,734 1153,734 1161,731 1170,724 1178,718 1186,717 1194,716 g:1202,710 1210,709 o:1219,719 b:1227,718 o:1244,723 b:1252,715 o:1260,722 b:1268,718 o:1277,719 1285,723 b:1293,723 o:1301,724 1310,726 1327,727 g:1335,713 o:1343,723`;
    const pts = plain(path);
    const top = pts.map(([x, y]) => [x, Math.min(y, 711)]), low = pts.map(([x, y]) => [x, Math.max(y, 737)]);
    s += `<path d="M236 711L${top.join('L')}V711z" fill="#108040" fill-opacity=".4"/><path d="M236 737L${low.join('L')}V737z" fill="#701010" fill-opacity=".5"/>`;
    s += line(23, 698.5, 1343, 698.5, '#222', 1, '4 4') + line(23, 711, 1343, 711, '#1010a0', 1.5) + line(23, 724.5, 1343, 724.5, '#1414a8', 1.500, '4 4') + line(23, 737, 1343, 737, '#cc0808', 1.5) + line(23, 749.5, 1343, 749.5, '#222', 1, '4 4');
    s += colored(path, { b: '#0000d8', o: '#ff9800', d: '#900000', g: '#00c800' }, 3);
    parse('467,724 533,726 797,724 822,724 855,725 881,725 1079,726 1170,726 1327,725').forEach(([x, y]) => s += up(x, y, '#0000b4'));
    parse('516,723 756,723 806,723 847,723 872,723 955,723 1087,723 1302,723').forEach(([x, y]) => s += down(x, y, '#b40000'));
    paint('willy', LEFT, 693, s);
    let a = '';
    [698, 711, 724, 737, 749].forEach(y => a += line(1571, y, 1576, y, '#333'));
    a += framed(1591, 722, '094', '#ff9800', 20) + framed(1577, 699, '0', '#222', 7) + framed(1577, 710, '-25', '#1414a8', 14) + framed(1577, 725, '-50', '#1414a8', 14) + framed(1577, 736, '-75', '#c00', 14) + framed(1577, 745, '-100', '#222', 19);
    paint('willyAxis', AXIS, 693, a);
})();

/* ---------- awesome ---------- */
(function awesome() {
    const slow = `g:187,784 195,783 o:217,785 g:235,785 o:252,785 g:268,786 o:310,786 g:330,786 350,784 376,783 o:385,784 409,785 442,788 g:459,785 475,784 492,781 508,781 o:530,782 545,784 g:575,783 616,782 640,777 665,773 690,771 o:723,773 g:735,772 756,762 o:772,767 785,774 797,782 g:830,778 847,775 872,774 o:888,777 912,780 g:955,778 o:965,781 979,790 1004,803 g:1018,803 1040,800 1070,797 1095,790 1112,790 o:1130,791 1150,795 g:1162,796 1174,790 1186,786 1194,778 1210,772 1234,770 o:1252,775 1268,778 g:1277,778 o:1285,778 1310,781 1327,785 g:1343,782`;
    const fast = `n:195,784 p:268,787 n:290,788 310,786 p:367,782 390,784 p:420,788 n:442,788 459,784 492,780 p:516,784 n:545,784 600,782 630,777 650,773 674,770 p:690,773 707,777 n:723,775 732,769 740,765 748,759 756,757 p:761,770 769,790 781,792 n:789,789 800,785 822,786 839,778 850,777 p:864,782 n:872,779 p:888,781 n:900,782 930,781 955,780 p:963,789 971,801 979,803 n:987,804 p:1004,808 n:1020,802 1037,797 1054,794 1070,785 1087,780 p:1103,786 n:1120,784 1130,785 p:1136,792 1145,795 n:1153,792 1165,786 1178,777 1194,774 1202,770 1210,765 p:1219,767 1235,776 n:1245,780 1268,780 p:1290,786 1327,792 n:1343,781`;
    const f = plain(fast), o = plain(slow), base = 785.5;
    const runs = [[78, '#0000f0'], [79, '#ff00e8'], [80, '#0000f0'], [83, '#ff00e8'], [89, '#0000f0'], [90, '#ff00e8'], [93, '#f01020'], [103, '#0000f0'], [105, '#ff00e8'], [106, '#0000f0'], [108, '#ff00e8'], [112, '#0000f0'], [113, '#ff00e8'], [117, '#f01020'], [118, '#009898'], [120, '#f01020'], [132, '#009898'], [135, '#f01020'], [137, '#009898'], [144, '#0000f0'], [147, '#ff00e8'], [151, '#0000f0'], [155, '#ff00e8'], [160, '#f01020']];
    let s = grid(752, 811, [761]);
    for (let i = 64; i < 160; i++) {
        const x = Math.round(barX(i)) - 4, y = at(f, barX(i)), z = at(o, barX(i));
        const color = runs.find(r => i < r[0])[1];
        if (i > 88 && i < 95 || i > 125 && i < 135 || i > 150) {
            const pale = i < 95 || i > 150 ? '#ffc8c8' : '#c8f4c8';
            for (const dx of [1, 5]) s += line(x + dx, z, x + dx, base, pale);
        }
        s += rect(x + 1, Math.min(y, base), 7, Math.abs(y - base), color) + line(x + 2.5, Math.min(y, base), x + 2.5, Math.max(y, base), '#e4e4fc');
    }
    s += line(23, base, 1346, base, '#0000e8', 1.5);
    s += colored(fast, { n: '#000030', p: '#b800b8' }, 3) + colored(slow, { g: '#60ff60', o: '#ff9800' }, 3);
    parse('244,786 318,786 385,784 508,782 582,783 682,771 764,773 1145,796 1228,774').forEach(([x, y]) => s += down(x, y, '#f4f400', 4));
    parse('302,787 335,787 451,787 558,783 616,782 732,771 1021,803 1153,794 1343,782').forEach(([x, y]) => s += up(x, y, '#00f0ff', 4));
    paint('awesome', LEFT, 752, s);
    let a = line(1571, 761, 1576, 761, '#333') + line(1571, 785, 1576, 785, '#22d') + line(1571, 809, 1576, 809, '#333');
    a += text(1577, 764, '5.000') + framed(1577, 777, '381,49', '#222', 30) + framed(1584, 783, '36,44', '#4ce04c', 25) + framed(1577, 790, '0', '#22d', 7) + text(1577, 808, '-5.000');
    paint('awesomeAxis', AXIS, 752, a);
})();

/* ---------- force ---------- */
(function force() {
    let s = rect(24, 811, 1319, 12, '#ffff88') + rect(24, 822, 1319, 12, '#d4d288');
    '25-41 66-73 107-115 157-190 288-297 339-388 397-422 429-446 454-512 520-545 562-586 611-677 686-694 703-784 843-867 876-884 958-975 984-991 1091-1124 1132-1157 1166-1174 1190-1231 1331-1346'.split(' ').forEach(z => {
        const [a, b] = z.split('-');
        s += rect(a, 811, b - a, 11, '#40ff40') + rect(a, 822, b - a, 12, '#36d650');
    });
    s += line(23, 822.5, 1343, 822.5, '#111');
    paint('force', LEFT, 811, s);
    paint('forceAxis', AXIS, 811, line(1571, 822, 1576, 822, '#333') + framed(1577, 821, '0,5000', '#222', 30));
    let y = '';
    for (let n = 1987; n <= 2032; n++) y += line(yearX(n), 833, yearX(n), 836, '#8296a2') + text(yearX(n), 843, n, '#222', 'text-anchor="middle"');
    paint('years', LEFT, 833, y);
})();

/* ---------- drawing tools ---------- */
const segment = c => `<path d="M2 8h14" stroke="${c}" stroke-width="1.500"/>`;
const ray = c => `<circle cx="7" cy="8" r="1.500" stroke="${c}"/><path d="M9 8h8" stroke="${c}" stroke-width="1.500"/>`;
const slant = c => `<path d="M2 14L16 2" stroke="${c}" stroke-width="1.500"/>`;
const ellipse = c => `<path d="M1 13h4M3 11v4M13 3h4M15 1v4" stroke="#22e"/><ellipse cx="9" cy="8" rx="5" ry="4" stroke="${c}" fill="${c}" fill-opacity=".25"/>`;
const bell = '<path d="M3 12c2-1 2-3 2-6 1-4 7-4 8 0 0 3 0 5 2 6z" fill="#ffe020" stroke="#a08000"/><path d="M8 14h2" stroke="#a08000" stroke-width="2"/>';
const toolIcons = [
    ['Cursor', '<path d="M6 2v11l3-3 2 4 1-1-2-4h4z" fill="#eee" stroke="#667"/>'],
    ['Lupa', '<circle cx="7" cy="6" r="4" stroke="#333" fill="#c8dce6"/><path d="M10 9l5 5" stroke="#333" stroke-width="2"/>'],
    ['Zoom', '<path d="M1 5h5M1 5v9h9" stroke="#22e" stroke-dasharray="2 1"/><circle cx="9" cy="6" r="4" stroke="#333" fill="#c8dce6"/><path d="M12 9l4 4" stroke="#333" stroke-width="2"/>'],
    ['Alerta', bell + '<path d="M9 2l3 4 5-5" stroke="#23f"/>'],
    ['Alarma', bell + '<path d="M2 3v4M16 3v4" stroke="#a08000"/>'],
    ['Fibonacci', '<path d="M1 12h4l2-8 2 5h4" stroke="#a33"/><path d="M14 13V8h4M14 10h3" stroke="#22e"/>'],
    ['Extensión', '<path d="M1 7h12" stroke="#e55"/><path d="M14 13V8h4M14 10h3" stroke="#22e"/>'],
    ['Zona azul', '<rect x="4" y="4" width="10" height="8" stroke="#57f" fill="#9bc"/><path d="M2 12h4M4 10v4M12 4h4M14 2v4" stroke="#22e"/>'],
    ['Zona roja', '<rect x="4" y="4" width="10" height="8" stroke="#d22" fill="#d89"/><path d="M2 12h4M4 10v4M12 4h4M14 2v4" stroke="#22e"/>'],
    ['Flecha', '<path d="M4 12l8-6" stroke="#000" stroke-width="2"/><path d="M10 3h6v6z" fill="#000"/><circle cx="4" cy="12" r="1.500" stroke="#000"/>'],
    ['Texto', '<rect x="2" y="2" width="13" height="12" rx="2" stroke="#69f"/><text x="9" y="11" text-anchor="middle" fill="#000">T</text>'],
    ['Globo', '<ellipse cx="9" cy="8" rx="7" ry="6" stroke="#69f"/><text x="9" y="11" text-anchor="middle" fill="#181">T</text>'],
    ['Segmento', '<circle cx="4" cy="12" r="2" stroke="#333"/><circle cx="14" cy="5" r="2" stroke="#333"/><path d="M6 11l6-5" stroke="#333"/>'],
    ['Rayo 1', ray('#62f462')], ['Rayo 2', ray('#20b030')], ['Rayo 3', ray('#107020')], ['Rayo 4', ray('#f01010')],
    ['Regla', '<path d="M2 12L13 3l3 3L5 15z" stroke="#556" fill="#bbc"/><path d="M6 9l2 2M9 7l2 2" stroke="#556"/>'],
    ['Ondas', '<path d="M2 2h14M2 6h14M2 14h14" stroke="#6b9" stroke-dasharray="1 1"/><path d="M2 12l4-5 3 3 3-6 4 4" stroke="#ddf"/>'],
    ['Elipse roja', ellipse('#e22')], ['Elipse marrón', ellipse('#a06020')], ['Elipse verde', ellipse('#188828')], ['Elipse clara', ellipse('#28e030')],
    ['Línea gris', slant('#333')], ['Línea verde', slant('#2a4')], ['Línea roja', slant('#f00')],
    ['Negra', segment('#333')], ['Salmón', segment('#f08080')], ['Lima', segment('#20f020')], ['Verde', segment('#107020')], ['Roja', segment('#f01010')], ['Azul', segment('#6090f8')], ['Marino', segment('#0000a0')],
    ['Vertical', '<path d="M9 1v14" stroke="#333" stroke-width="1.500"/>'],
    ['Ángulo', '<path d="M14 3L2 12h13" stroke="#e44"/><path d="M9 6c2 1 2 4 2 6M13 7h2v3h-2z" stroke="#22e"/>'],
    ['Círculo', '<circle cx="8" cy="8" r="6" stroke="#f07828"/><path d="M6 8h4M8 6v4M12 4h3" stroke="#22e"/>'],
    ['Elliott', '<path d="M1 12h4M3 10v4M4 6h4M6 4v4M8 11h4M10 9v4M11 4h5M14 2v4M13 12h4" stroke="#22e"/>'],
    ['ABC', '<path d="M2 12l5-8 6 9" stroke="#79b" stroke-dasharray="2 1"/><path d="M1 11h4M3 9v4M10 4h4M12 2v4M12 12h4" stroke="#22e"/>'],
    ['Aceptar', '<path d="M2 9l4 4L16 4" stroke="#28b838" stroke-width="3"/>'],
    ['Pulgar', '<path d="M2 8h3v6H2zM6 8l3-2V1h2v5h5l-1 8H6z" fill="#28c038" stroke="#188a28"/>'],
    ['Borrar', '<path d="M4 3l10 10M14 3L4 13" stroke="#e01010" stroke-width="4"/>']
];
document.getElementById('tools').innerHTML = toolIcons.map(([name, art], i) =>
    `<button class="${i ? '' : 'on'}" aria-label="${name}"><svg width="18" height="16" viewBox="0 0 18 16" fill="none">${art}</svg></button>`).join('');
```
